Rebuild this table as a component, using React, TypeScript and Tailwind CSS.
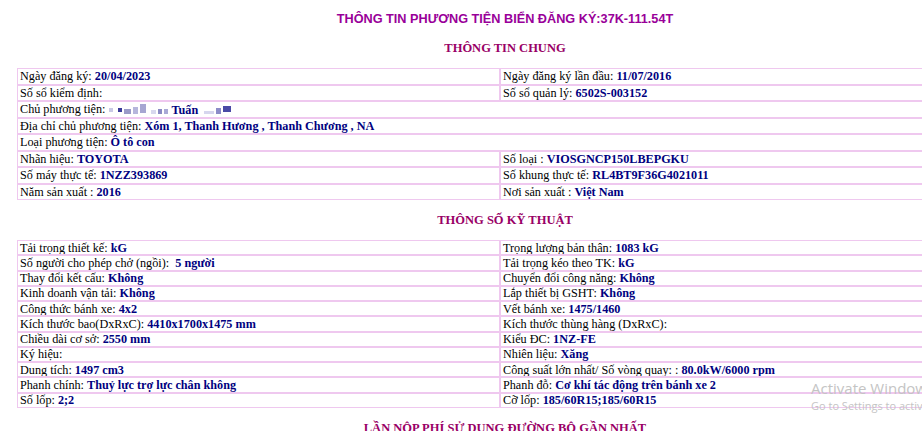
import React from 'react';

type Pair = { label: string; value?: React.ReactNode };
type Row = { left: Pair; right?: Pair };

const generalRows: Row[] = [
  { left: { label: 'Ngày đăng ký: ', value: '20/04/2023' }, right: { label: 'Ngày đăng ký lần đầu: ', value: '11/07/2016' } },
  { left: { label: 'Số sổ kiểm định: ' }, right: { label: 'Số sổ quản lý: ', value: '6502S-003152' } },
  { left: { label: 'Chủ phương tiện: ', value: 'owner' } },
  { left: { label: 'Địa chỉ chủ phương tiện: ', value: 'Xóm 1, Thanh Hương , Thanh Chương , NA' } },
  { left: { label: 'Loại phương tiện: ', value: 'Ô tô con' } },
  { left: { label: 'Nhãn hiệu: ', value: 'TOYOTA' }, right: { label: 'Số loại : ', value: 'VIOSGNCP150LBEPGKU' } },
  { left: { label: 'Số máy thực tế: ', value: '1NZZ393869' }, right: { label: 'Số khung thực tế: ', value: 'RL4BT9F36G4021011' } },
  { left: { label: 'Năm sản xuất : ', value: '2016' }, right: { label: 'Nơi sản xuất : ', value: 'Việt Nam' } },
];

const techRows: Row[] = [
  { left: { label: 'Tải trọng thiết kế: ', value: 'kG' }, right: { label: 'Trọng lượng bản thân: ', value: '1083 kG' } },
  { left: { label: 'Số người cho phép chở (ngồi):  ', value: '5 người' }, right: { label: 'Tải trọng kéo theo TK: ', value: 'kG' } },
  { left: { label: 'Thay đổi kết cấu: ', value: 'Không' }, right: { label: 'Chuyển đổi công năng: ', value: 'Không' } },
  { left: { label: 'Kinh doanh vận tải: ', value: 'Không' }, right: { label: 'Lắp thiết bị GSHT: ', value: 'Không' } },
  { left: { label: 'Công thức bánh xe: ', value: '4x2' }, right: { label: 'Vết bánh xe: ', value: '1475/1460' } },
  { left: { label: 'Kích thước bao(DxRxC): ', value: '4410x1700x1475 mm' }, right: { label: 'Kích thước thùng hàng (DxRxC): ' } },
  { left: { label: 'Chiều dài cơ sở: ', value: '2550 mm' }, right: { label: 'Kiểu ĐC: ', value: '1NZ-FE' } },
  { left: { label: 'Ký hiệu: ' }, right: { label: 'Nhiên liệu: ', value: 'Xăng' } },
  { left: { label: 'Dung tích: ', value: '1497 cm3' }, right: { label: 'Công suất lớn nhất/ Số vòng quay: : ', value: '80.0kW/6000 rpm' } },
  { left: { label: 'Phanh chính: ', value: 'Thuỷ lực trợ lực chân không' }, right: { label: 'Phanh đỗ: ', value: 'Cơ khí tác động trên bánh xe 2' } },
  { left: { label: 'Số lốp: ', value: '2;2' }, right: { label: 'Cỡ lốp: ', value: '185/60R15;185/60R15' } },
];

// pixelated owner name, as blurred in the screenshot
const Owner = () => (
  <span className="inline-flex items-center align-middle gap-[2px]">
    <span className="inline-block w-[4px] h-[4px] bg-[#c9c9e6]" />
    <span className="inline-block w-[4px] h-[4px] bg-[#3b3b9a] ml-[3px]" />
    <span className="inline-block w-[7px] h-[5px] bg-[#9a9ac8] mt-[4px]" />
    <span className="inline-block w-[5px] h-[7px] bg-[#b6b6dc] mt-[2px]" />
    <span className="inline-block w-[6px] h-[9px] bg-[#a6a6d2] mb-[3px]" />
    <span className="inline-block w-[5px] h-[4px] bg-[#d8d8ee] mt-[4px] ml-[3px]" />
    <span className="inline-block w-[4px] h-[5px] bg-[#8a8ac4] mt-[3px]" />
    <span className="inline-block w-[4px] h-[5px] bg-[#a9a9d6] mt-[3px]" />
    <span className="font-bold text-[#000080] ml-[2px]">Tuấn</span>
    <span className="inline-block w-[10px] h-[3px] bg-[#d6d6ee] mt-[5px] ml-[4px]" />
    <span className="inline-block w-[5px] h-[6px] bg-[#8c8cc8] mt-[2px]" />
    <span className="inline-block w-[8px] h-[6px] bg-[#4a4aa6] mb-[1px]" />
  </span>
);

const Cell = ({ pair, span, h }: { pair?: Pair; span?: boolean; h: string }) => (
  <td
    colSpan={span ? 2 : 1}
    className={`${h} p-0 pl-[2px] border border-[#efc8ef] leading-[12px] whitespace-pre align-middle overflow-hidden`}
  >
    {pair && (
      <>
        {pair.label}
        {pair.value === 'owner' ? (
          <Owner />
        ) : (
          pair.value && <span className="font-bold text-[#000080]">{pair.value}</span>
        )}
      </>
    )}
  </td>
);

const InfoTable = ({ rows, h, wide = [] }: { rows: Row[]; h: string; wide?: number[] }) => (
  <table className="mx-[17px] w-[966px] border-separate border-spacing-0 table-fixed">
    <colgroup>
      <col className="w-[483px]" />
      <col className="w-[483px]" />
    </colgroup>
    <tbody>
      {rows.map((r, i) => (
        <tr key={i}>
          <Cell pair={r.left} span={wide.includes(i)} h={h} />
          {!wide.includes(i) && <Cell pair={r.right} h={h} />}
        </tr>
      ))}
    </tbody>
  </table>
);

const SectionTitle = ({ children, className }: { children: React.ReactNode; className: string }) => (
  <h2 className={`text-center font-bold text-[12.5px] leading-[16px] text-[#990066] ${className}`}>{children}</h2>
);

export default function App() {
  return (
    <div className="relative w-[922px] h-[431px] overflow-hidden bg-white text-black text-[12.2px] font-['Liberation_Serif',serif]">
      <div className="w-[1010px]">
        <h1 className="pt-[12px] text-center font-bold text-[12.7px] leading-[14px] text-[#990099] font-['Liberation_Sans',sans-serif]">
          THÔNG TIN PHƯƠNG TIỆN BIỂN ĐĂNG KÝ:37K-111.54T
        </h1>
        <SectionTitle className="mt-[14px]">THÔNG TIN CHUNG</SectionTitle>
        <div className="mt-[12px]">
          <InfoTable rows={generalRows} h="h-[16.5px]" wide={[2, 3, 4]} />
        </div>
        <SectionTitle className="mt-[12px]">THÔNG SỐ KỸ THUẬT</SectionTitle>
        <div className="mt-[12px]">
          <InfoTable rows={techRows} h="h-[15.25px]" />
        </div>
        <SectionTitle className="mt-[12px]">LẦN NỘP PHÍ SỬ DỤNG ĐƯỜNG BỘ GẦN NHẤT</SectionTitle>
      </div>
      <div className="absolute left-[811px] top-[378px] whitespace-nowrap text-[#c4c4c4] font-['Open_Sans',sans-serif]">
        <div className="text-[15px] leading-[20px]">Activate Windows</div>
        <div className="text-[11px] leading-[16px]">Go to Settings to activate Windows.</div>
      </div>
    </div>
  );
}
